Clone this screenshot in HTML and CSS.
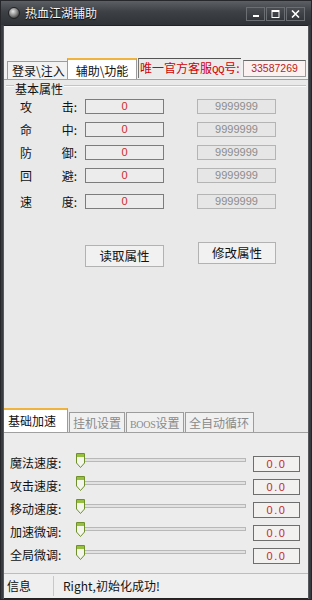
FILE: index.html
```html
<!DOCTYPE html>
<html lang="zh-CN">
<head>
    <meta charset="UTF-8">
    <meta name="viewport" content="width=device-width, initial-scale=1.0">
    <title>热血江湖辅助</title>
    <link rel="stylesheet" href="styles.css">
</head>
<body>
    <div class="window">
        <div class="titlebar">
            <span class="app-icon"></span>
            <span class="title">热血江湖辅助</span>
            <div class="win-btns">
                <span class="win-btn">
                    <svg width="8" height="8" viewBox="0 0 8 8"><rect x="1" y="5" width="6" height="2" fill="#fff"/></svg>
                </span>
                <span class="win-btn">
                    <svg width="9" height="8" viewBox="0 0 9 8"><rect x="1" y="0.5" width="7" height="7" fill="none" stroke="#fff" stroke-width="1"/><rect x="1" y="0.5" width="7" height="1.5" fill="#fff"/></svg>
                </span>
                <span class="win-btn">
                    <svg width="9" height="8" viewBox="0 0 9 8"><path d="M1 0.5 L8 7.5 M8 0.5 L1 7.5" stroke="#fff" stroke-width="1.6"/></svg>
                </span>
            </div>
        </div>

        <div class="client">
            <div class="top-tabs">
                <div class="tab">登录\注入</div>
                <div class="tab active">辅助\功能</div>
                <div class="qq-label">唯一官方客服<span class="latin">QQ</span>号:</div>
                <div class="qq-box">33587269</div>
            </div>

            <div class="main-panel">
                <div class="group-head"><span>基本属性</span></div>

                <div class="attr-rows">
                    <div class="attr-row">
                        <div class="attr-name"><span>攻</span><span>击:</span></div>
                        <div class="field">0</div>
                        <div class="field target">9999999</div>
                    </div>
                    <div class="attr-row">
                        <div class="attr-name"><span>命</span><span>中:</span></div>
                        <div class="field">0</div>
                        <div class="field target">9999999</div>
                    </div>
                    <div class="attr-row">
                        <div class="attr-name"><span>防</span><span>御:</span></div>
                        <div class="field">0</div>
                        <div class="field target">9999999</div>
                    </div>
                    <div class="attr-row">
                        <div class="attr-name"><span>回</span><span>避:</span></div>
                        <div class="field">0</div>
                        <div class="field target">9999999</div>
                    </div>
                    <div class="attr-row last">
                        <div class="attr-name"><span>速</span><span>度:</span></div>
                        <div class="field">0</div>
                        <div class="field target">9999999</div>
                    </div>
                </div>

                <div class="btn-row">
                    <button class="btn read">读取属性</button>
                    <button class="btn write">修改属性</button>
                </div>
            </div>

            <div class="bottom-tabs">
                <div class="tab active">基础加速</div>
                <div class="tab">挂机设置</div>
                <div class="tab"><span class="boos">BOOS</span>设置</div>
                <div class="tab">全自动循环</div>
            </div>

            <div class="speed-panel">
                <div class="speed-row">
                    <div class="speed-name">魔法速度:</div>
                    <div class="slider"><span class="track"></span><span class="thumb"></span></div>
                    <div class="speed-val">0.0</div>
                </div>
                <div class="speed-row">
                    <div class="speed-name">攻击速度:</div>
                    <div class="slider"><span class="track"></span><span class="thumb"></span></div>
                    <div class="speed-val">0.0</div>
                </div>
                <div class="speed-row">
                    <div class="speed-name">移动速度:</div>
                    <div class="slider"><span class="track"></span><span class="thumb"></span></div>
                    <div class="speed-val">0.0</div>
                </div>
                <div class="speed-row">
                    <div class="speed-name">加速微调:</div>
                    <div class="slider"><span class="track"></span><span class="thumb"></span></div>
                    <div class="speed-val">0.0</div>
                </div>
                <div class="speed-row">
                    <div class="speed-name">全局微调:</div>
                    <div class="slider"><span class="track"></span><span class="thumb"></span></div>
                    <div class="speed-val">0.0</div>
                </div>
            </div>

            <div class="statusbar">
                <div class="status-cap">信息</div>
                <div class="status-msg">Right,初始化成功!</div>
            </div>
        </div>
    </div>
</body>
</html>
```

FILE: styles.css
```css
/* 全局 */
* {
    box-sizing: border-box;
    margin: 0;
    padding: 0;
}
html, body {
    width: 312px;
    height: 600px;
    overflow: hidden;
    background: #2e3135;
    font-family: "Noto Sans CJK SC", "Liberation Sans", sans-serif;
    font-size: 12px;
    color: #111;
}

/* 窗口外框 */
.window {
    width: 312px;
    height: 600px;
    display: flex;
    flex-direction: column;
    background: #383b40;
    border: 1px solid #25272a;
}

/* 标题栏 */
.titlebar {
    height: 24px;
    display: flex;
    align-items: center;
    padding: 0 6px 0 7px;
    background: linear-gradient(#5c5f64, #3d4045 45%, #2f3236);
}
.app-icon {
    width: 12px;
    height: 12px;
    border-radius: 50%;
    background: radial-gradient(circle at 40% 35%, #e6e6e6, #8a8a8a 45%, #3a3a3a 80%);
    border: 1px solid #222;
}
.title {
    margin-left: 5px;
    color: #f4f4f4;
    font-size: 12px;
    line-height: 14px;
    text-shadow: 0 1px 1px #000;
}
.win-btns {
    margin-left: auto;
    display: flex;
    gap: 1px;
    margin-top: 2px;
}
.win-btn {
    width: 19px;
    height: 14px;
    display: flex;
    align-items: center;
    justify-content: center;
    border: 1px solid #6b6e73;
    background: linear-gradient(#4a4d52, #33363a);
}

/* 客户区 */
.client {
    flex: 1;
    margin: 0 2px;
    display: flex;
    flex-direction: column;
    background: #f0f0f0;
    border-top: 1px solid #222;
    border-left: 1px solid #55585c;
    border-right: 1px solid #55585c;
}

/* 上方选项卡 */
.top-tabs {
    margin-top: 32px;
    height: 21px;
    display: flex;
    align-items: flex-end;
    padding-left: 3px;
}
.tab {
    height: 18px;
    padding: 0 4px;
    line-height: 17px;
    background: #f2f2f2;
    border: 1px solid #9c9c9c;
    border-bottom: none;
    color: #111;
    white-space: nowrap;
    overflow: hidden;
}
.top-tabs .tab {
    width: 61px;
}
.top-tabs .tab.active {
    width: 70px;
    height: 21px;
    padding-top: 2px;
    background: #fff;
    border-top: 2px solid #f0b43c;
    text-align: center;
    margin-left: -1px;
}
.qq-label {
    margin-left: 1px;
    width: 103px;
    height: 20px;
    align-self: flex-start;
    padding-left: 1px;
    line-height: 18px;
    color: #d20000;
    background: #ebebeb;
    border-top: 1px solid #555;
    border-left: 1px solid #777;
    white-space: nowrap;
    overflow: hidden;
}
.qq-label .latin {
    font-family: "Liberation Mono", monospace;
    font-size: 11px;
    letter-spacing: -0.5px;
}
.qq-box {
    margin-left: 2px;
    width: 63px;
    height: 17px;
    align-self: flex-start;
    margin-top: 2px;
    font-family: "Liberation Sans", sans-serif;
    font-size: 10.5px;
    line-height: 15px;
    text-align: center;
    color: #c02020;
    background: #fbf1f1;
    border: 1px solid #9a9a9a;
    border-top-color: #666;
}

/* 主面板 */
.main-panel {
    height: 328px;
    background: #e9e9e9;
    border-top: 1px solid #a3a3a3;
}
.group-head {
    display: flex;
    align-items: flex-start;
    margin: 2px 2px 0;
    height: 14px;
}
.group-head::before,
.group-head::after {
    content: "";
    height: 1px;
    margin-top: 3px;
    background: #c4c4c4;
    box-shadow: 0 1px 0 #fafafa;
}
.group-head::before {
    width: 8px;
}
.group-head::after {
    flex: 1;
}
.group-head span {
    padding: 0 1px;
    line-height: 13px;
}

.attr-rows {
    margin-top: 3px;
}
.attr-row {
    display: flex;
    align-items: center;
    height: 15px;
    margin-top: 8px;
}
.attr-row:first-child {
    margin-top: 0;
}
.attr-row.last {
    margin-top: 11px;
}
.attr-name {
    margin-left: 16px;
    width: 57px;
    display: flex;
    justify-content: space-between;
    line-height: 15px;
}
.field {
    margin-left: 8px;
    width: 79px;
    height: 15px;
    font-family: "Liberation Sans", sans-serif;
    font-size: 11px;
    line-height: 13px;
    text-align: center;
    color: #cc2a2a;
    background: #ececec;
    border: 1px solid #7c7c7c;
}
.field.target {
    margin-left: 33px;
    color: #8c8c8c;
    background: #e6e6e6;
    border-color: #b4b4b4;
}

.btn-row {
    margin-top: 33px;
    display: flex;
    align-items: flex-start;
}
.btn {
    height: 22px;
    font-family: "Noto Sans CJK SC", sans-serif;
    font-size: 12.5px;
    line-height: 20px;
    color: #111;
    background: #f1f1f1;
    border: 1px solid #b2b2b2;
}
.btn.read {
    margin-left: 81px;
    margin-top: 3px;
    width: 79px;
}
.btn.write {
    margin-left: 34px;
    width: 78px;
}

/* 下方选项卡 */
.bottom-tabs {
    height: 25px;
    display: flex;
    align-items: flex-end;
    background: #e9e9e9;
}
.bottom-tabs .tab {
    height: 20px;
    line-height: 19px;
    color: #8a8a8a;
    background: #f0f0f0;
    padding: 0 3px;
    margin-left: 1px;
}
.bottom-tabs .tab.active {
    height: 24px;
    width: 64px;
    margin-left: 0;
    padding: 1px 0 0 4px;
    color: #111;
    background: #fff;
    border-top: 2px solid #f0b43c;
    border-left: none;
}
.bottom-tabs .tab:nth-child(2) { width: 56px; }
.bottom-tabs .tab:nth-child(3) { width: 58px; }
.bottom-tabs .tab:nth-child(4) { width: 69px; }
.boos {
    font-family: "Liberation Serif", serif;
    font-size: 10px;
    letter-spacing: -0.3px;
}

/* 加速面板 */
.speed-panel {
    height: 141px;
    padding-top: 18px;
    background: #ececec;
    border-top: 1px solid #a0a0a0;
}
.speed-row {
    height: 23px;
    display: flex;
    align-items: center;
}
.speed-name {
    margin-left: 6px;
    width: 65px;
    line-height: 15px;
    font-size: 12px;
}
.slider {
    position: relative;
    width: 171px;
    height: 23px;
}
.track {
    position: absolute;
    left: 5px;
    right: 0;
    top: 7px;
    height: 4px;
    background: #e2e2e2;
    border: 1px solid #b8b8b8;
}
.thumb {
    position: absolute;
    left: 1px;
    top: 2px;
    width: 9px;
    height: 15px;
    background: url("data:image/svg+xml;utf8,<svg xmlns='http://www.w3.org/2000/svg' width='9' height='15' viewBox='0 0 9 15'><path d='M0.5 0.5 H8.5 V10 L4.5 14.5 L0.5 10 Z' fill='%23f4f6ee' stroke='%236e8f2a' stroke-width='1'/><rect x='1' y='1' width='7' height='3' fill='%2398c040'/></svg>") no-repeat;
}
.speed-val {
    margin-left: 7px;
    margin-top: 2px;
    width: 47px;
    height: 16px;
    font-family: "Liberation Sans", sans-serif;
    font-size: 11px;
    line-height: 14px;
    letter-spacing: 1.5px;
    text-align: center;
    color: #c02a2a;
    background: #f3f0f0;
    border: 1px solid #6e6e6e;
}

/* 状态栏 */
.statusbar {
    flex: 1;
    display: flex;
    align-items: center;
    background: #efefef;
    border-top: 1px solid #bdbdbd;
    border-bottom: 1px solid #222;
}
.status-cap {
    width: 50px;
    padding-left: 3px;
    line-height: 20px;
    border-right: 1px solid #c8c8c8;
}
.status-msg {
    padding-left: 9px;
    line-height: 20px;
    font-family: "Noto Sans CJK SC", sans-serif;
}
```
